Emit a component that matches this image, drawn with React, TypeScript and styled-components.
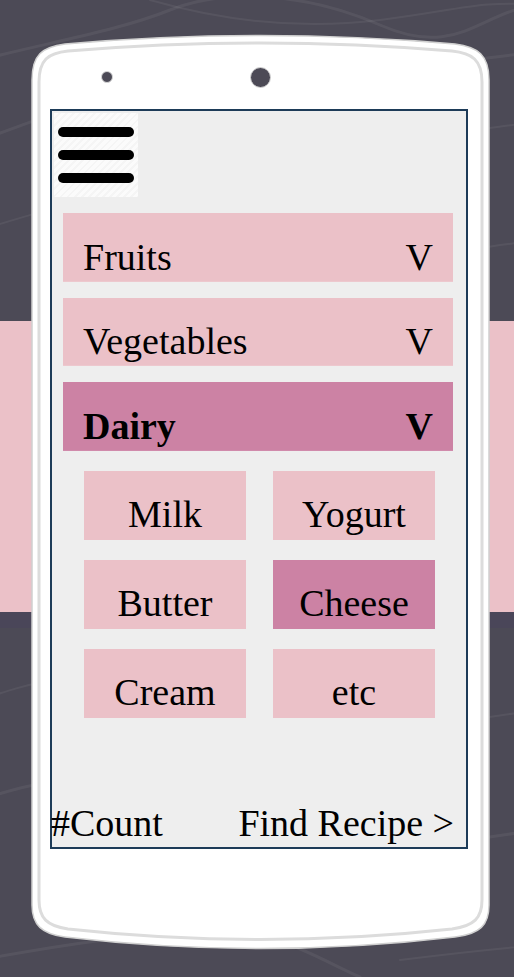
import React from "react";
import styled, { createGlobalStyle } from "styled-components";

const GlobalStyle = createGlobalStyle`
  html, body { margin: 0; padding: 0; background: #4c4a56; }
  body { font-family: "Liberation Serif", "Times New Roman", serif; }
  * { box-sizing: border-box; }
`;

const Page = styled.div`
  position: relative;
  width: 514px;
  height: 977px;
  overflow: hidden;
  background: #4c4a56;
  padding-top: 33px;
  padding-left: 31px;
`;

const Backdrop = styled.svg`
  position: absolute;
  left: 0;
  top: 0;
  z-index: 0;
`;

const Phone = styled.div`
  position: relative;
  z-index: 1;
  width: 459px;
  height: 918px;
`;

const PhoneShape = styled.svg`
  position: absolute;
  left: 0;
  top: 0;
  z-index: 0;
`;

const PhoneInner = styled.div`
  position: relative;
  z-index: 1;
  display: flex;
  flex-direction: column;
`;

const SensorBar = styled.div`
  height: 76px;
  padding-top: 12px;
  padding-left: 70px;
  display: flex;
  align-items: center;
`;

const Sensor = styled.div<{ $size: number; $gap?: number }>`
  width: ${(p) => p.$size}px;
  height: ${(p) => p.$size}px;
  margin-left: ${(p) => p.$gap ?? 0}px;
  border-radius: 50%;
  background: #4c4a56;
  border: 1.5px solid #d6d6d6;
`;

const Screen = styled.div`
  margin-left: 19px;
  width: 418px;
  height: 740px;
  border: 2px solid #1d3b58;
  background: #eeeeee;
  display: flex;
  flex-direction: column;
  color: #000;
  font-family: "Liberation Serif", "Times New Roman", serif;
  font-size: 38px;
  line-height: 42px;
`;

const MenuButton = styled.div`
  margin: 2px 0 0 2px;
  width: 84px;
  height: 84px;
  padding: 14px 0 0 4px;
  display: flex;
  flex-direction: column;
  gap: 13px;
  background: repeating-linear-gradient(
    135deg,
    #fbfbfb 0px,
    #fbfbfb 3px,
    #f5f5f5 3px,
    #f5f5f5 5px
  );
`;

const Bar = styled.span`
  display: block;
  width: 76px;
  height: 10px;
  border-radius: 5px;
  background: #000;
`;

const Accordion = styled.div`
  margin: 16px 0 0 11px;
  width: 390px;
  display: flex;
  flex-direction: column;
  gap: 16px;
`;

const CategoryRow = styled.div<{ $active?: boolean }>`
  height: 68.5px;
  padding: 22.5px 20px 0 20px;
  display: flex;
  justify-content: space-between;
  background: ${(p) => (p.$active ? "#cc82a4" : "#ebc1c8")};
  font-weight: ${(p) => (p.$active ? 700 : 400)};
  border-bottom: 1px solid ${(p) => (p.$active ? "#d08aab" : "#edc8ce")};
`;

const ItemGrid = styled.div`
  margin: 20px 0 0 32px;
  display: grid;
  grid-template-columns: 162px 162px;
  grid-auto-rows: 69px;
  column-gap: 27px;
  row-gap: 20px;
`;

const Item = styled.div<{ $active?: boolean }>`
  padding-top: 22px;
  text-align: center;
  background: ${(p) => (p.$active ? "#cc82a4" : "#ebc1c8")};
`;

const Footer = styled.div`
  margin-top: auto;
  margin-left: -1px;
  padding: 0 12px 3px 0;
  display: flex;
  justify-content: space-between;
`;

const categories = [
  { name: "Fruits", active: false },
  { name: "Vegetables", active: false },
  { name: "Dairy", active: true },
];

const items = [
  { name: "Milk" },
  { name: "Yogurt" },
  { name: "Butter" },
  { name: "Cheese", active: true },
  { name: "Cream" },
  { name: "etc" },
];

const outerPath =
  "M 32,80 C 32,55 42,47 65,44 Q 260,27 455,44 C 478,47 489,55 489,80 L 489,905 C 489,925 480,934 455,937 Q 260,960 65,937 C 42,934 32,925 32,905 Z";
const innerPath =
  "M 39,82 C 39,60 48,53 68,51 Q 260,35 452,51 C 472,53 482,60 482,82 L 482,900 C 482,918 474,926 452,929 Q 260,950 68,929 C 47,926 39,918 39,900 Z";

export default function App() {
  return (
    <>
      <GlobalStyle />
      <Page>
        <Backdrop width="514" height="977" viewBox="0 0 514 977">
          <rect x="0" y="0" width="514" height="977" fill="#4c4a56" />
          <g fill="none" stroke="#ffffff" strokeOpacity="0.06" strokeLinecap="round">
            <path d="M -20,60 C 60,40 120,30 170,10 S 300,-10 380,25 S 480,10 540,5" strokeWidth="3" />
            <path d="M 150,0 C 220,20 300,30 380,20 S 480,0 540,5" strokeWidth="2" />
            <path d="M -20,140 C 40,120 80,100 140,90" strokeWidth="3" />
            <path d="M -20,230 C 30,215 60,205 120,195" strokeWidth="2" />
            <path d="M 470,60 C 490,58 510,55 540,52" strokeWidth="3" />
            <path d="M 470,130 C 495,128 515,125 540,120" strokeWidth="2" />
            <path d="M 470,250 C 495,245 515,243 540,240" strokeWidth="2" />
            <path d="M -20,700 C 10,690 25,685 45,682" strokeWidth="2" />
            <path d="M -20,800 C 10,790 25,786 45,783" strokeWidth="3" />
            <path d="M 470,720 C 495,716 515,713 540,710" strokeWidth="2" />
            <path d="M 470,840 C 495,836 515,833 540,830" strokeWidth="3" />
            <path d="M -20,960 C 60,945 130,935 200,930 S 320,960 360,977" strokeWidth="3" />
            <path d="M 400,960 C 440,955 480,950 540,945" strokeWidth="2" />
          </g>
          <rect x="0" y="321" width="514" height="291" fill="#ebc1c8" />
          <rect x="0" y="612" width="514" height="16" fill="#4a4659" />
        </Backdrop>
        <Phone>
          <PhoneShape width="459" height="918" viewBox="31 33 459 918">
            <path d={outerPath} fill="#ffffff" stroke="#d0d0d0" strokeWidth="1.5" />
            <path d={innerPath} fill="none" stroke="#dcdcdc" strokeWidth="3" />
          </PhoneShape>
          <PhoneInner>
            <SensorBar>
              <Sensor $size={12} />
              <Sensor $size={21} $gap={137} />
            </SensorBar>
            <Screen>
              <MenuButton>
                <Bar />
                <Bar />
                <Bar />
              </MenuButton>
              <Accordion>
                {categories.map((c) => (
                  <CategoryRow key={c.name} $active={c.active}>
                    <span>{c.name}</span>
                    <span>V</span>
                  </CategoryRow>
                ))}
              </Accordion>
              <ItemGrid>
                {items.map((i) => (
                  <Item key={i.name} $active={i.active}>
                    {i.name}
                  </Item>
                ))}
              </ItemGrid>
              <Footer>
                <span>#Count</span>
                <span>Find Recipe &gt;</span>
              </Footer>
            </Screen>
          </PhoneInner>
        </Phone>
      </Page>
    </>
  );
}
